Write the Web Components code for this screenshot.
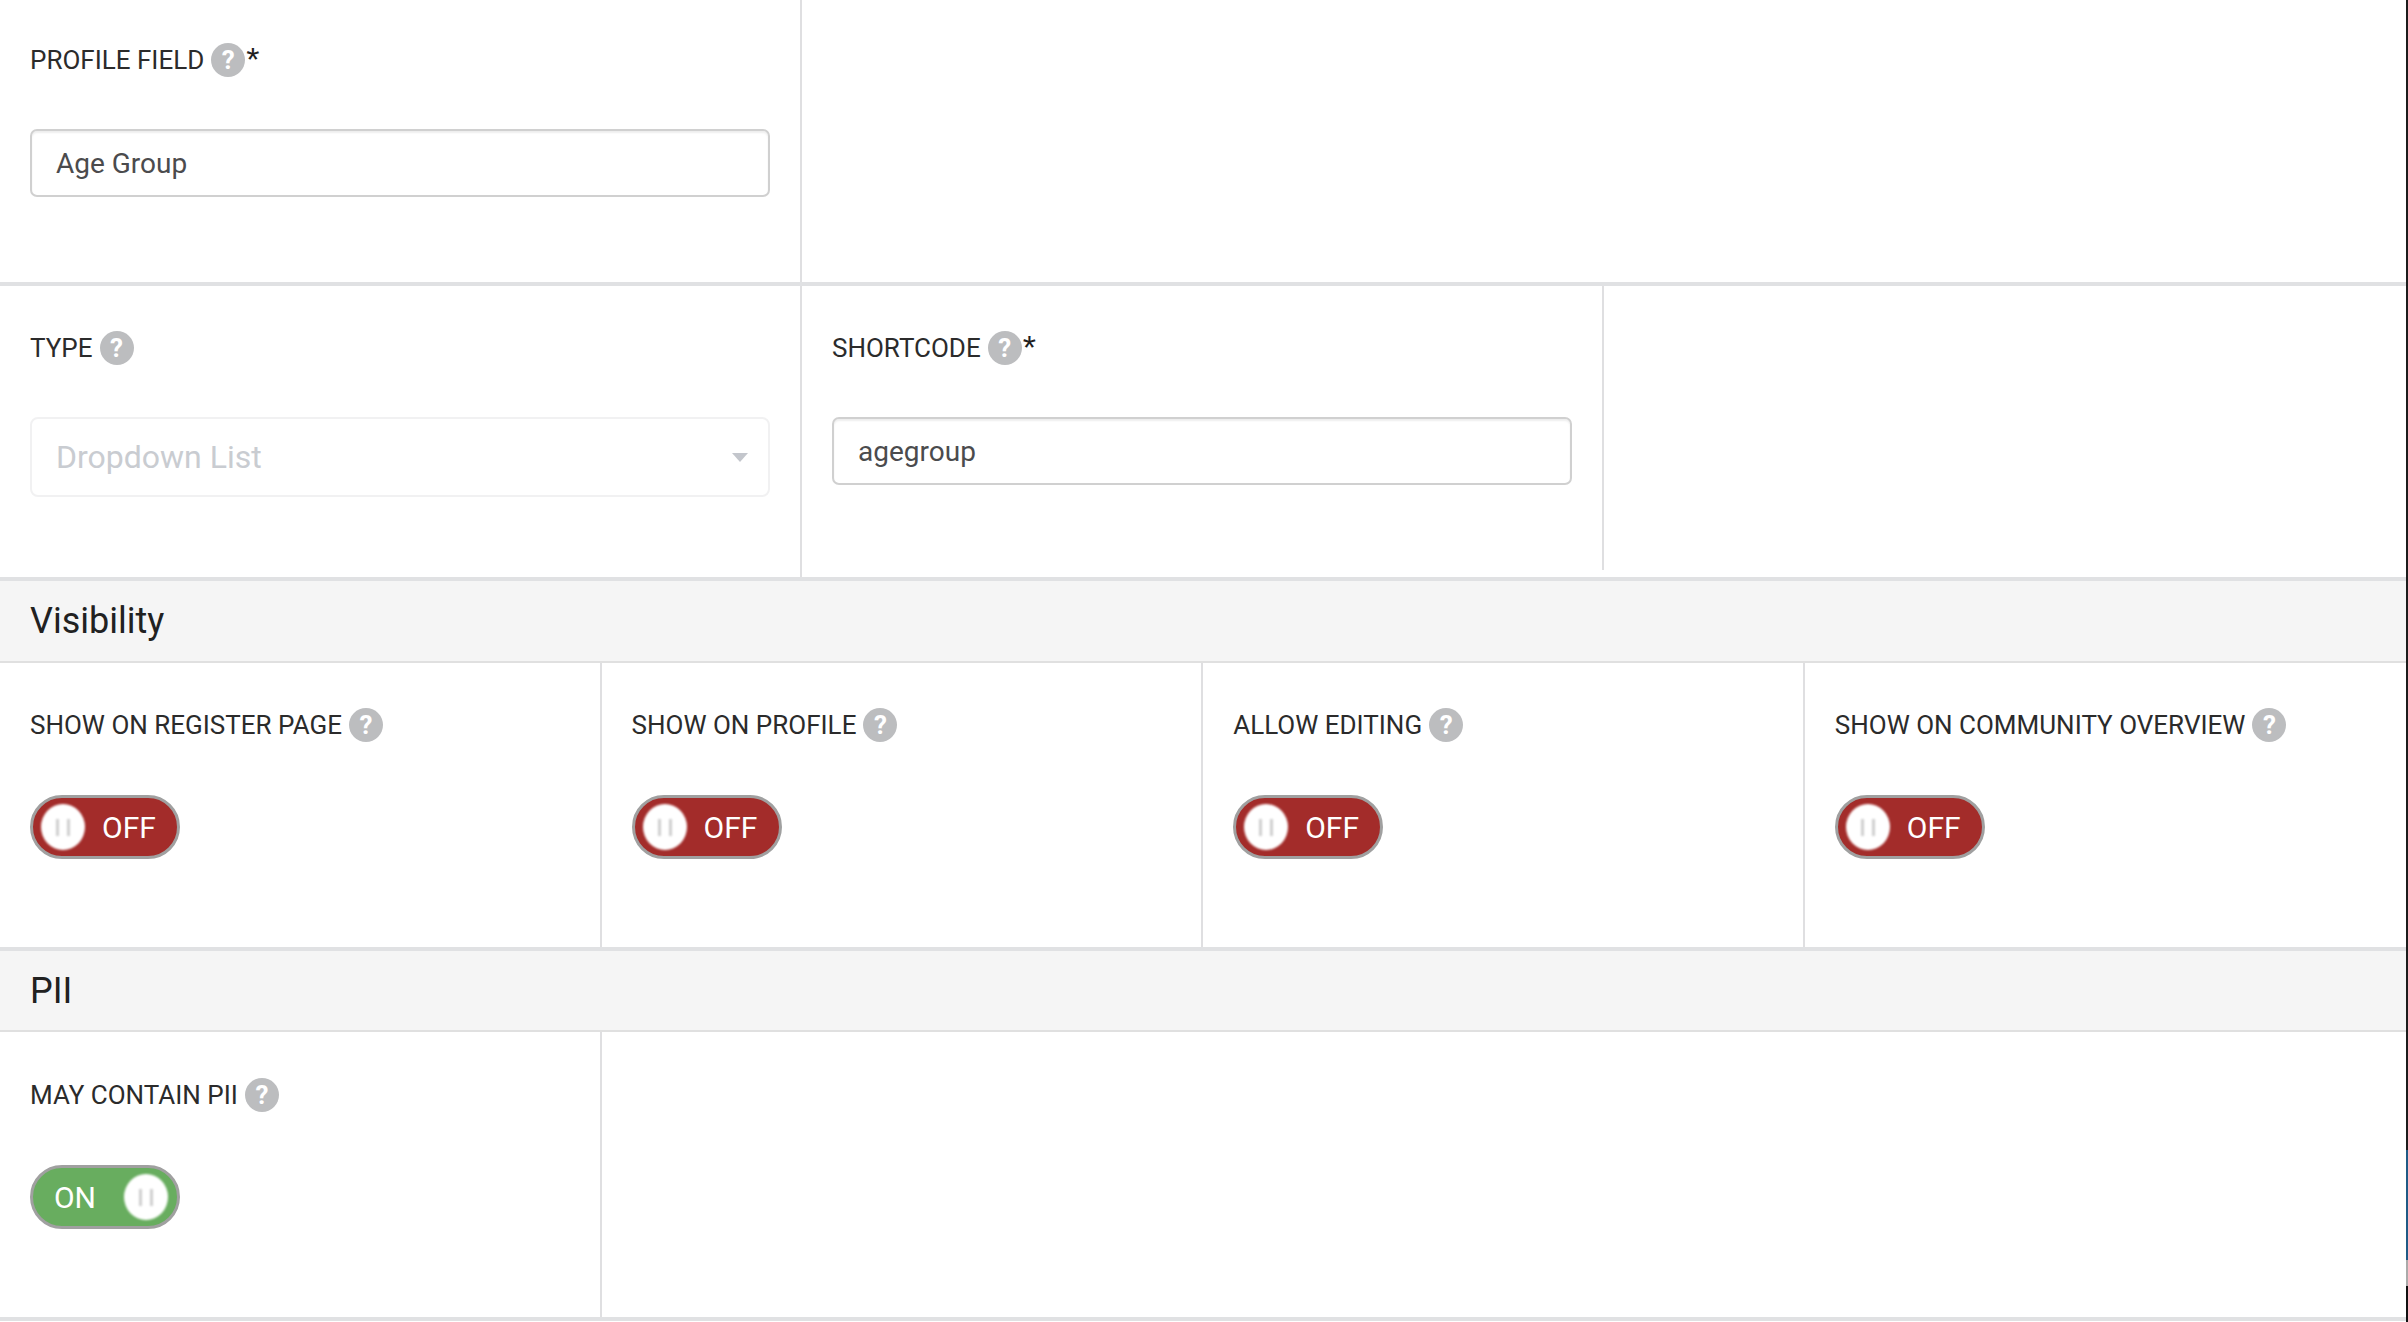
<!DOCTYPE html>
<html><head><meta charset="utf-8"><style>
html,body{margin:0;padding:0;background:#fff;height:100%;overflow:hidden}
body{font-family:Roboto,"Liberation Sans",sans-serif;display:flex;width:2408px;height:1322px}
main{flex:1;min-width:0;display:flex;flex-direction:column}
#edge{width:2px;height:1322px;background:linear-gradient(#1c1c1c 0 1150px,#1f5a85 1150px 1260px,#aaa 1260px 1286px,#111 1286px)}
</style></head><body>
<main>
<f-row h="282" cols="3">
  <f-cell top="40">
    <f-label required>PROFILE FIELD</f-label>
    <f-input>Age Group</f-input>
  </f-cell>
  <f-cell plain></f-cell>
</f-row>
<f-row h="291" cols="3">
  <f-cell>
    <f-label>TYPE</f-label>
    <f-select>Dropdown List</f-select>
  </f-cell>
  <f-cell short-line>
    <f-label required>SHORTCODE</f-label>
    <f-input style="margin-right:2px">agegroup</f-input>
  </f-cell>
  <f-cell plain></f-cell>
</f-row>
<f-head>Visibility</f-head>
<f-row h="284" cols="4">
  <f-cell><f-label>SHOW ON REGISTER PAGE</f-label><f-toggle>OFF</f-toggle></f-cell>
  <f-cell><f-label>SHOW ON PROFILE</f-label><f-toggle>OFF</f-toggle></f-cell>
  <f-cell><f-label>ALLOW EDITING</f-label><f-toggle>OFF</f-toggle></f-cell>
  <f-cell plain><f-label>SHOW ON COMMUNITY OVERVIEW</f-label><f-toggle>OFF</f-toggle></f-cell>
</f-row>
<f-head h="79">PII</f-head>
<f-row h="285" cols="4">
  <f-cell top="43"><f-label>MAY CONTAIN PII</f-label><f-toggle on>ON</f-toggle></f-cell>
  <f-cell plain></f-cell>
</f-row>
</main>
<div id="edge"></div>
<script>
function def(name,css,html,init){
  customElements.define(name,class extends HTMLElement{
    constructor(){super();const r=this.attachShadow({mode:'open'});r.innerHTML='<style>'+css+'</style>'+html;}
    connectedCallback(){if(init)init(this);}
  });
}
def('f-row',`:host{display:grid;border-bottom:4px solid #e0e1e3}`,'<slot></slot>',el=>{
  el.style.height=el.getAttribute('h')+'px';
  const cols=+el.getAttribute('cols');
  const kids=el.children.length;
  if(cols===3) el.style.gridTemplateColumns=kids===3?'802px 802px 1fr':'802px 1fr';
  else el.style.gridTemplateColumns=`repeat(${kids-1},601.6px) 1fr`;
});
def('f-cell',`:host{display:block;position:relative;box-sizing:border-box;padding:42px 30px 0;border-right:2px solid #dfdfe1;min-width:0;height:100%}
:host([plain]){border-right:0}
:host([short-line]){border-right:0}
:host([short-line])::after{content:"";position:absolute;right:0;top:0;bottom:7px;width:2px;background:#dfdfe1}`,'<slot></slot>',el=>{
  if(el.hasAttribute('top'))el.style.paddingTop=el.getAttribute('top')+'px';
});
def('f-label',`:host{display:flex;align-items:flex-start;height:40px;font:400 26px/40px Roboto,sans-serif;color:#2b2b2b;white-space:nowrap}
.h{flex:none;width:34px;height:34px;margin:3px 0 0 7px;border-radius:50%;background:#bcbdbf;color:#fff;font:700 26px/34px Roboto,sans-serif;text-align:center}
.s{display:none;font:400 34px/34px "Liberation Sans",sans-serif;color:#1f1f1f;margin:2px 0 0 1px;width:13px}
:host([required]) .s{display:block}`,'<slot></slot><span class="h">?</span><span class="s">*</span>');
def('f-input',`:host{display:flex;align-items:center;box-sizing:border-box;margin-top:49px;height:68px;border:2px solid #d0d0d0;border-radius:7px;padding:0 24px;font:400 28px Roboto,sans-serif;color:#4b4b4d;box-shadow:inset 0 2px 2px #eee;background:#fff}`,'<slot></slot>');
def('f-select',`:host{display:flex;align-items:center;justify-content:space-between;box-sizing:border-box;margin-top:49px;height:80px;border:2px solid #f1f1f2;border-radius:8px;padding:0 20px 0 24px;font:400 32px Roboto,sans-serif;color:#c9ccd1;background:#fff}
i{width:0;height:0;border:8px solid transparent;border-top:9px solid #c3c6cc;border-bottom:0}`,'<slot></slot><i></i>');
def('f-head',`:host{display:flex;align-items:center;height:80px;padding:0 30px;background:#f5f5f5;border-bottom:2px solid #e0e0e0;font:400 36px Roboto,sans-serif;color:#212121}`,'<slot></slot>',el=>{
  if(el.getAttribute('h'))el.style.height=el.getAttribute('h')+'px';
});
def('f-toggle',`:host{display:flex;align-items:center;box-sizing:border-box;margin-top:50px;width:150px;height:64px;border:3px solid #a0a0a0;border-radius:32px;background:#a32c2a;color:#fff;font:400 30px Roboto,sans-serif;padding:0 0 0 8px;gap:17px}
:host([on]){background:#68ad5f;flex-direction:row-reverse;justify-content:flex-start;padding:0 9px 0 0;gap:28px}
.k{flex:none;display:flex;gap:8px;justify-content:center;align-items:center;width:44px;height:46px;border-radius:50%;background:#fff;filter:blur(.8px)}
.k b{width:3px;height:17px;background:#cfcfcf}`,'<span class="k"><b></b><b></b></span><slot></slot>');
</script>
</body></html>
